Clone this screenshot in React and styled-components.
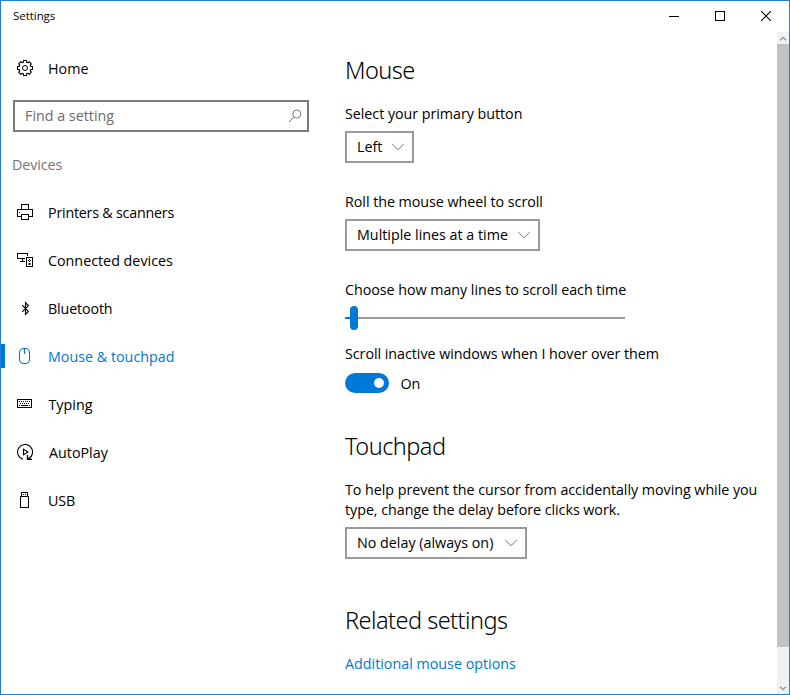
import React from "react";
import styled, { createGlobalStyle } from "styled-components";

const ACCENT = "#0078d7";

const GlobalStyle = createGlobalStyle`
  *, *::before, *::after { box-sizing: border-box; }
  body {
    margin: 0;
    background: #fff;
    color: #000;
    font-family: "Open Sans", "Noto Sans", sans-serif;
    font-size: 14.3px;
    line-height: 20px;
  }
  button, input { font: inherit; color: inherit; letter-spacing: inherit; }
`;

const Window = styled.div`
  display: flex;
  flex-direction: column;
  width: 790px;
  height: 695px;
  border: 1px solid #1c80d2;
  background: #fff;
  overflow: hidden;
`;

const TitleBar = styled.header`
  display: flex;
  justify-content: space-between;
  height: 31px;
  flex: none;
`;

const WindowTitle = styled.span`
  padding: 5px 0 0 12px;
  font-size: 11.4px;
`;

const CaptionButtons = styled.div`
  display: flex;
`;

const CaptionButton = styled.button`
  width: 46px;
  height: 30px;
  padding: 0;
  border: 0;
  background: transparent;
  display: flex;
  align-items: center;
  justify-content: center;
`;

const Body = styled.div`
  display: flex;
  flex: 1;
  min-height: 0;
`;

const Sidebar = styled.aside`
  width: 344px;
  flex: none;
  padding-top: 13px;
`;

const NavItem = styled.a`
  display: flex;
  align-items: center;
  height: 48px;
  padding-left: 16px;
  gap: ${(p) => p.$gap || 15}px;
  color: ${(p) => (p.$active ? ACCENT : "#000")};
  box-shadow: ${(p) => (p.$active ? `inset 4px 0 0 ${ACCENT}` : "none")};
  clip-path: ${(p) => (p.$active ? "inset(11px 0 13px)" : "none")};
  white-space: nowrap;
  letter-spacing: ${(p) => p.$spacing || 0}px;
  svg { margin-top: -2px; flex: none; }
`;

const SearchBox = styled.div`
  display: flex;
  align-items: center;
  justify-content: space-between;
  width: 296px;
  height: 32px;
  margin: 7px 0 0 12px;
  padding: 0 5px 0 10px;
  border: 2px solid #7a7a7a;
`;

const SearchInput = styled.input`
  width: 230px;
  height: 20px;
  padding: 0;
  border: 0;
  outline: 0;
  background: none;
  &::placeholder { color: #6b6b6b; opacity: 1; }
`;

const GroupLabel = styled.h2`
  margin: 23px 0 14px 11px;
  font-size: inherit;
  font-weight: 400;
  letter-spacing: -0.1px;
  color: #757575;
`;

const Content = styled.main`
  flex: 1;
  padding-top: 22px;
  white-space: nowrap;
`;

const Heading = styled.h1`
  margin: ${(p) => p.$top || 0}px 0 18px;
  font: 300 23.5px/32px "Noto Sans", "Open Sans", sans-serif;
  letter-spacing: -0.52px;
`;

const Label = styled.div`
  margin-top: ${(p) => p.$top || 0}px;
  letter-spacing: -0.04px;
`;

const Dropdown = styled.button`
  display: flex;
  align-items: center;
  justify-content: space-between;
  width: ${(p) => p.$width}px;
  height: 32px;
  margin-top: 7px;
  padding: 0 7px 0 10px;
  border: 2px solid #999;
  background: #fff;
  white-space: nowrap;
`;

const Slider = styled.div`
  display: flex;
  align-items: center;
  width: 280px;
  height: 24px;
  margin: 6px 0 14px;
`;

const Track = styled.div`
  height: 2px;
  flex: ${(p) => (p.$filled ? "0 0 5px" : "1")};
  background: ${(p) => (p.$filled ? ACCENT : "#999")};
`;

const Thumb = styled.div`
  width: 8px;
  height: 24px;
  border-radius: 4px;
  background: ${ACCENT};
`;

const ToggleRow = styled.div`
  display: flex;
  align-items: center;
  gap: 11.5px;
  height: 20px;
  margin-top: 9px;
`;

const Toggle = styled.div`
  display: flex;
  align-items: center;
  justify-content: flex-end;
  width: 44px;
  height: 20px;
  padding-right: 5px;
  border-radius: 10px;
  background: ${ACCENT};
`;

const ToggleKnob = styled.div`
  width: 10px;
  height: 10px;
  border-radius: 50%;
  background: #fff;
`;

const ToggleText = styled.span`
  padding-top: 1px;
`;

const Link = styled.a`
  color: ${ACCENT};
`;

const Scrollbar = styled.div`
  display: flex;
  flex-direction: column;
  width: 12px;
  flex: none;
  background: #f1f1f1;
`;

const ScrollArrow = styled.div`
  display: flex;
  align-items: center;
  justify-content: center;
  height: 12px;
  flex: none;
`;

const ScrollThumb = styled.div`
  height: 603px;
  margin-bottom: 35px;
  flex: none;
  background: #c2c2c2;
`;

const Icon = ({ children, crisp }) => (
  <svg width="16" height="16" viewBox="0 0 16 16" fill="none" stroke="currentColor"
    shapeRendering={crisp ? "crispEdges" : "auto"}>
    {children}
  </svg>
);

const gearPath = (() => {
  const points = [];
  for (let i = 0; i < 8; i++) {
    const a = (i * Math.PI) / 4;
    [[-0.27, 6], [-0.2, 7.6], [0.2, 7.6], [0.27, 6]].forEach(([d, r]) => {
      points.push(`${(8 + r * Math.sin(a + d)).toFixed(2)} ${(8 - r * Math.cos(a + d)).toFixed(2)}`);
    });
  }
  return `M${points.join("L")}Z`;
})();

const GearIcon = () => (
  <Icon>
    <path d={gearPath} strokeWidth="1.1" strokeLinejoin="round" />
    <circle cx="8" cy="8" r="2.5" />
  </Icon>
);

const PrinterIcon = () => (
  <Icon crisp>
    <path d="M4.5 5.5V.5h7v5M4.5 12.5h-4v-7h15v7h-4M4.5 10.5h7v5h-7z" />
    <path d="M2 8h1v1H2z" fill="currentColor" stroke="none" />
  </Icon>
);

const DevicesIcon = () => (
  <Icon crisp>
    <path d="M10.5 4V1.5H.5v5H8M5.5 7v2M3 9.5h5M9.5 5.5h6v9h-6z" />
    <path d="M12 7h1v1h-1zM11 8h1v1h-1zM13 8h1v1h-1zM12 9h1v1h-1zM12 11h1v2h-1z" fill="currentColor" stroke="none" />
    <path d="M11 11h3v2h-3z" fill="currentColor" stroke="none" opacity="0.5" />
  </Icon>
);

const BluetoothIcon = () => (
  <Icon>
    <path d="M5.2 5.2l6.2 6.2-2.9 2.9V2.7l2.9 2.9-6.2 6.2" strokeWidth="1.15" />
  </Icon>
);

const MouseIcon = () => (
  <Icon>
    <rect x="2.5" y=".5" width="10" height="15" rx="4" strokeWidth="1.1" />
    <path d="M7.5 1v5" strokeWidth="1.1" />
  </Icon>
);

const KeyboardIcon = () => (
  <Icon crisp>
    <path d="M.5 3.5h14v8H.5z" />
    <path d="M2 5.5h11M3 7.5h10" strokeDasharray="1 1" />
    <path d="M2 9.5h1M4 9.5h7M12 9.5h1" />
  </Icon>
);

const AutoPlayIcon = () => (
  <Icon>
    <path d="M6 15.2A7.5 7.5 0 1 1 11.2 14.8" strokeWidth="1.1" />
    <path d="M6.5 5.3v5.4L11 8z" strokeWidth="1.1" />
    <path d="M10.5 11v4.5H15" strokeWidth="1.3" />
  </Icon>
);

const UsbIcon = () => (
  <Icon crisp>
    <path d="M4.5 4.5v-4h6v4M3.5 4.5h8v11h-8z" />
    <path d="M6 2h1v1H6zM8 2h1v1H8z" fill="currentColor" stroke="none" />
  </Icon>
);

const SearchIcon = () => (
  <svg width="14" height="14" viewBox="0 0 14 14" fill="none" stroke="#7a7a7a">
    <circle cx="8.8" cy="5" r="4" />
    <path d="M6 8L1 13" />
  </svg>
);

const Chevron = () => (
  <svg width="14" height="8" viewBox="0 0 14 8" fill="none" stroke="#777">
    <path d="M1.2 1l5.8 5.7L12.8 1" />
  </svg>
);

const ScrollChevron = ({ down }) => (
  <svg width="8" height="5" viewBox="0 0 8 5" fill="none" stroke="#999" strokeWidth="1.4">
    <path d={down ? "M1 .8l3 2.8 3-2.8" : "M1 4.2l3-2.8 3 2.8"} />
  </svg>
);

const devices = [
  { name: "Printers & scanners", icon: <PrinterIcon />, spacing: -0.22 },
  { name: "Connected devices", icon: <DevicesIcon /> },
  { name: "Bluetooth", icon: <BluetoothIcon />, spacing: -0.15 },
  { name: "Mouse & touchpad", icon: <MouseIcon />, active: true },
  { name: "Typing", icon: <KeyboardIcon />, gap: 15.5 },
  { name: "AutoPlay", icon: <AutoPlayIcon />, gap: 16 },
  { name: "USB", icon: <UsbIcon />, spacing: -0.1 },
];

export default function App() {
  return (
    <>
      <GlobalStyle />
      <Window>
        <TitleBar>
          <WindowTitle>Settings</WindowTitle>
          <CaptionButtons>
            <CaptionButton aria-label="Minimize">
              <svg width="10" height="10" shapeRendering="crispEdges" stroke="#000"><path d="M0 5.5h10" /></svg>
            </CaptionButton>
            <CaptionButton aria-label="Maximize">
              <svg width="10" height="10" shapeRendering="crispEdges" stroke="#000" fill="none"><path d="M.5 .5h9v9h-9z" /></svg>
            </CaptionButton>
            <CaptionButton aria-label="Close">
              <svg width="10" height="10" stroke="#000"><path d="M0 0l10 10M10 0L0 10" strokeWidth="1.1" /></svg>
            </CaptionButton>
          </CaptionButtons>
        </TitleBar>
        <Body>
          <Sidebar>
            <NavItem><GearIcon />Home</NavItem>
            <SearchBox>
              <SearchInput placeholder="Find a setting" />
              <SearchIcon />
            </SearchBox>
            <GroupLabel>Devices</GroupLabel>
            {devices.map((d) => (
              <NavItem key={d.name} $active={d.active} $spacing={d.spacing} $gap={d.gap}>
                {d.icon}
                {d.name}
              </NavItem>
            ))}
          </Sidebar>
          <Content>
            <Heading>Mouse</Heading>
            <Label>Select your primary button</Label>
            <Dropdown $width={69}>Left<Chevron /></Dropdown>
            <Label $top={29}>Roll the mouse wheel to scroll</Label>
            <Dropdown $width={195}>Multiple lines at a time<Chevron /></Dropdown>
            <Label $top={29}>Choose how many lines to scroll each time</Label>
            <Slider>
              <Track $filled />
              <Thumb />
              <Track />
            </Slider>
            <Label>Scroll inactive windows when I hover over them</Label>
            <ToggleRow>
              <Toggle><ToggleKnob /></Toggle>
              <ToggleText>On</ToggleText>
            </ToggleRow>
            <Heading $top={37}>Touchpad</Heading>
            <Label>
              To help prevent the cursor from accidentally moving while you
              <br />
              type, change the delay before clicks work.
            </Label>
            <Dropdown $width={182}>No delay (always on)<Chevron /></Dropdown>
            <Heading $top={45}>Related settings</Heading>
            <Link>Additional mouse options</Link>
          </Content>
          <Scrollbar>
            <ScrollArrow><ScrollChevron /></ScrollArrow>
            <ScrollThumb />
            <ScrollArrow><ScrollChevron down /></ScrollArrow>
          </Scrollbar>
        </Body>
      </Window>
    </>
  );
}
